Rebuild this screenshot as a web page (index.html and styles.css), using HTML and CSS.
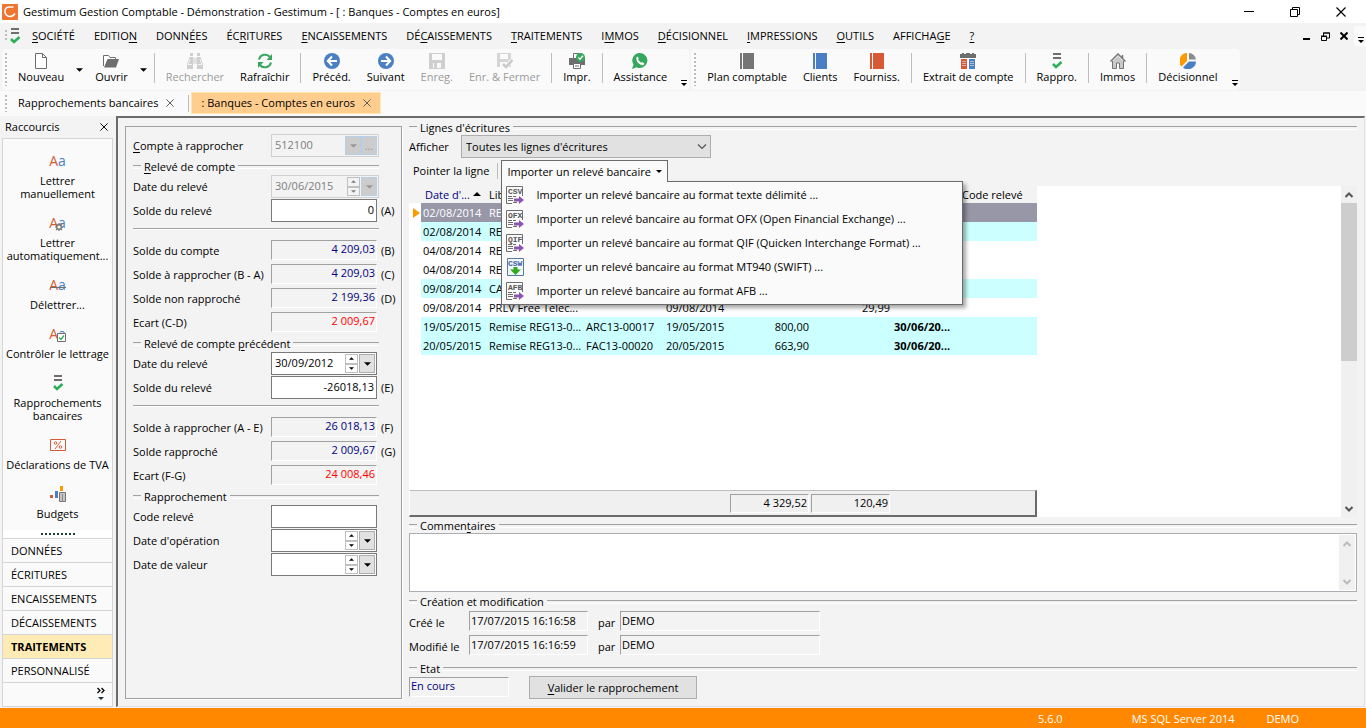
FILE: index.html
```
<!DOCTYPE html>
<html lang="fr">
<head>
<meta charset="utf-8">
<title>Gestimum Gestion Comptable</title>
<link rel="stylesheet" href="styles.css">
</head>
<body>
<svg class="sprite" aria-hidden="true">
  <symbol id="i-rappro" viewBox="0 0 16 16"><path d="M4 0h8v2H4zM4 4h8v2H4z" fill="#6e6e6e"/><path d="M4 11l3 3 5.500-5" fill="none" stroke="#2fae58" stroke-width="2.600"/></symbol>
  <symbol id="i-new" viewBox="0 0 16 16"><path d="M2.500.5h7l4 4v11h-11zM9.500.5v4h4" fill="#fff" stroke="#6e6e6e"/></symbol>
  <symbol id="i-open" viewBox="0 0 16 16"><path d="M.5 13V2.500h5l1.500 2h5.500v2" fill="#fff" stroke="#6e6e6e"/><path d="M1 14.500L4.500 6H16l-3 8.500z" fill="#6e6e6e"/></symbol>
  <symbol id="i-find" viewBox="0 0 16 16"><path d="M3 0h3v3H3zM10 0h3v3h-3zM2.500 4h4v1h3V4h4L16 11v5h-6v-5H6v5H0v-5z" fill="#cfcfcf"/><path d="M3 6l-2 6M7 5v6M9 5v6M13 6l2 6M1 11.500h4M11 11.500h4" stroke="#f4f4f4" fill="none"/></symbol>
  <symbol id="i-refresh" viewBox="0 0 16 16"><path d="M2 6.500A6.300 6.300 0 0 1 13 4M14 9.500A6.300 6.300 0 0 1 3 12" fill="none" stroke="#37a75e" stroke-width="2"/><path d="M15 1v6H9.500zM1 15V9h5.500z" fill="#37a75e"/></symbol>
  <symbol id="i-prev" viewBox="0 0 16 16"><circle cx="8" cy="8" r="8" fill="#4a80c3"/><path d="M13 8H4M8 3.500L3.800 8 8 12.500" fill="none" stroke="#fff" stroke-width="2"/></symbol>
  <symbol id="i-next" viewBox="0 0 16 16"><circle cx="8" cy="8" r="8" fill="#4a80c3"/><path d="M3 8h9M8 3.500L12.200 8 8 12.500" fill="none" stroke="#fff" stroke-width="2"/></symbol>
  <symbol id="i-save" viewBox="0 0 16 16"><path d="M0 0h16v16H0z" fill="#cfcfcf"/><path d="M3 1h10v6H3zM4 10h8v5H4z" fill="#fafafa"/><path d="M5 10h3v5H5z" fill="#cfcfcf"/></symbol>
  <symbol id="i-saveclose" viewBox="0 0 16 16"><path d="M0 0h14v14H0z" fill="#d5d5d5"/><path d="M3 1h8v5H3zM3 9h7v5H3z" fill="#fafafa"/><path d="M6 11l3 3 6-7" fill="none" stroke="#fafafa" stroke-width="4"/><path d="M6 11l3 3 6.500-7" fill="none" stroke="#cacaca" stroke-width="2.600"/></symbol>
  <symbol id="i-print" viewBox="0 0 16 16"><path d="M4.500 6V.5h6V6" fill="#fff" stroke="#6e6e6e"/><path d="M0 5h16v7H0z" fill="#6e6e6e"/><path d="M4.500 10.500h7v5h-7z" fill="#fff" stroke="#6e6e6e"/><path d="M6 13h4" stroke="#6e6e6e"/><circle cx="11.500" cy="4.500" r="4.500" fill="#37a75e"/><path d="M9.500 4.500l1.500 1.700L14 2.800" fill="none" stroke="#fff" stroke-width="1.300"/></symbol>
  <symbol id="i-phone" viewBox="0 0 16 16"><path d="M8 0a7.500 7.500 0 1 1-3.500 14.200L0 16l1.500-4.500A7.500 7.500 0 0 1 8 0z" fill="#37a75e"/><path d="M5 3.500l1.700 1.200-.4 2.300 2.500 2.600 2.200-.4 1.400 1.700c-1.200 2-3.800 1.300-5.600-.3C4.800 8.700 3.500 5.500 5 3.500z" fill="#fff"/></symbol>
  <symbol id="i-book" viewBox="0 0 16 16"><path d="M1 0h2v16H1zM4 0h11v16H4z" fill="currentColor"/></symbol>
  <symbol id="i-extract" viewBox="0 0 16 16"><path d="M.500 3.500h15v12H.500z" fill="#fff"/><path d="M1 6h6v10H1z" fill="#d65a36"/><path d="M9 6h6v10H9z" fill="#4a80c3"/><path d="M0 1h2V0h2v1h2V0h4v1h2V0h2v1h2v4H0z" fill="#6e6e6e"/><path d="M2 8.500h4M2 10.500h4M2 12.500h4M10 8.500h4M10 10.500h4M10 12.500h4" stroke="#fff" stroke-width=".5"/></symbol>
  <symbol id="i-house" viewBox="0 0 16 16"><path d="M2.500 8v7.500h4V10h3v5.500h4V8" fill="#c9c9c9" stroke="#757575"/><path d="M.5 8.500L8 1l7.500 7.500M12.500 5V2" fill="none" stroke="#757575" stroke-width="1.500"/><path d="M3 8l5-5 5 5z" fill="#c9c9c9"/></symbol>
  <symbol id="i-pie" viewBox="0 0 16 16"><path d="M7 8V0A8 8 0 0 0 1.500 13.500z" fill="#f90"/><path d="M9 0v6.500h7A7.500 7.500 0 0 0 9 0z" fill="#8a8a8a"/><path d="M9 8.500h7A8 8 0 0 1 3 14.500z" fill="#4a80c3"/></symbol>
  <symbol id="i-gear" viewBox="0 0 8 8"><circle cx="4" cy="4" r="2.300" fill="#fafafa" stroke="#757575" stroke-width="1.400"/><path d="M4 0v1.500M4 6.500V8M0 4h1.500M6.500 4H8M1 1l1.200 1.200M5.800 5.800L7 7M1 7l1.200-1.200M5.800 2.200L7 1" stroke="#757575" stroke-width="1.200"/></symbol>
  <symbol id="i-checkbox" viewBox="0 0 9 9"><path d="M.5.5h8v8h-8z" fill="#fff" stroke="#6e6e6e"/><path d="M2 4.500L4 6.500 7 2.500" fill="none" stroke="#2fae58" stroke-width="1.300"/></symbol>
  <symbol id="i-tva" viewBox="0 0 16 16"><path d="M.5 2.500h15v11H.500z" fill="#fff" stroke="#d65a36"/><path d="M5 12l6-8" stroke="#d65a36"/><circle cx="5.500" cy="6" r="1.300" fill="none" stroke="#d65a36"/><circle cx="10.500" cy="10" r="1.300" fill="none" stroke="#d65a36"/></symbol>
  <symbol id="i-budget" viewBox="0 0 16 16"><path d="M0 9h3v3H0z" fill="#d65a36"/><path d="M5 5h3v7H5z" fill="#4a80c3"/><path d="M10 0h3v5h-3z" fill="#f90"/><path d="M9.500 6.500h6v9h-6z" fill="#fff" stroke="#757575"/><path d="M10 8h5M10 10h5M10 12h5M10 14h5M12.500 8v8" stroke="#8a8a8a"/></symbol>
  <symbol id="i-file" viewBox="0 0 18 18"><path d="M.5 17.500V.5h16V10M.5 17.500H6" fill="none" stroke="#6e6e6e"/><path d="M2 10.500h4M2 12.500h5M2 14.500h5M7 10.500h3M7 16.500h4" stroke="#6e6e6e"/><path d="M8 12.500h5V10l5 4-5 4v-2.500H8z" fill="#8a55ac"/></symbol>
  <symbol id="i-filedown" viewBox="0 0 18 18"><path d="M1.500.5h16v17h-16z" fill="#f4f8fc" stroke="#5a7a9c"/><path d="M7.500 9h4v2.500H15L9.500 17 4 11.500h3.500z" fill="#35a826"/></symbol>
  <symbol id="i-down" viewBox="0 0 8 4"><path d="M0 0h8L4 4z" fill="currentColor"/></symbol>
  <symbol id="i-up" viewBox="0 0 8 4"><path d="M0 4h8L4 0z" fill="currentColor"/></symbol>
  <symbol id="i-chev" viewBox="0 0 8 6"><path d="M.5 1L4 4.500 7.500 1" fill="none" stroke="currentColor" stroke-width="2"/></symbol>
  <symbol id="i-chevup" viewBox="0 0 8 6"><path d="M.5 5L4 1.500 7.500 5" fill="none" stroke="currentColor" stroke-width="2"/></symbol>
  <symbol id="i-x" viewBox="0 0 10 10"><path d="M.5.5l9 9M9.500.5l-9 9" stroke="currentColor" stroke-width="1.200" fill="none"/></symbol>
  <symbol id="i-overflow" viewBox="0 0 6 6"><path d="M0 0h6v1H0zM0 3h6L3 6z" fill="currentColor"/></symbol>
</svg>

<header class="titlebar">
  <svg class="logo" viewBox="0 0 16 16"><rect width="16" height="16" rx="1" fill="#ef7430"/><path d="M11.500 3H7a4 4 0 0 0-4 4.500C3 10 5 12.500 8 12.500c2.500 0 4-1.500 5-3" fill="none" stroke="#fff" stroke-width="1.500"/></svg>
  <span class="title">Gestimum Gestion Comptable - Démonstration - Gestimum - [ : Banques - Comptes en euros]</span>
  <div class="winbtns">
    <button aria-label="Réduire"><svg width="10" height="10"><path d="M0 4.500h10" stroke="#000"/></svg></button>
    <button aria-label="Restaurer"><svg width="10" height="10"><path d="M.5 2.500h7v7h-7zM2.500 2V.5h7v7H8" fill="none" stroke="#000"/></svg></button>
    <button aria-label="Fermer"><svg width="10" height="10"><use href="#i-x"/></svg></button>
  </div>
</header>

<nav class="menubar">
  <span class="grip"></span>
  <svg width="16" height="16"><use href="#i-rappro"/></svg>
  <button><u>S</u>OCIÉTÉ</button><button>EDITIO<u>N</u></button><button>DONN<u>É</u>ES</button><button>ÉC<u>R</u>ITURES</button><button><u>E</u>NCAISSEMENTS</button><button>DÉ<u>C</u>AISSEMENTS</button><button><u>T</u>RAITEMENTS</button><button>I<u>M</u>MOS</button><button><u>D</u>ÉCISIONNEL</button><button><u>I</u>MPRESSIONS</button><button><u>O</u>UTILS</button><button>AFFICHA<u>G</u>E</button><button><u>?</u></button>
  <div class="mdibtns">
    <button aria-label="Réduire la fenêtre"><svg width="8" height="8"><path d="M0 7h7" stroke="#000" stroke-width="2"/></svg></button>
    <button aria-label="Restaurer la fenêtre"><svg width="9" height="9"><path d="M.5 4.500h5v4h-5zM2.500 4V1h6v5H6M2 1h7M0 4h6" fill="none" stroke="#000"/></svg></button>
    <button aria-label="Fermer la fenêtre"><svg width="8" height="8"><path d="M.5.5l7 7M7.500.5l-7 7" stroke="#000" stroke-width="2"/></svg></button>
    <button class="menu-more" aria-label="Options"><svg width="6" height="6"><use href="#i-overflow"/></svg></button>
  </div>
</nav>

<div class="toolbars">
  <div class="toolbar">
    <span class="grip"></span>
    <button class="tool"><svg><use href="#i-new"/></svg>Nouveau</button><button class="drop" aria-label="Options Nouveau"><svg><use href="#i-down"/></svg></button>
    <button class="tool"><svg><use href="#i-open"/></svg>Ouvrir</button><button class="drop" aria-label="Options Ouvrir"><svg><use href="#i-down"/></svg></button>
    <span class="sep"></span>
    <button class="tool" disabled><svg><use href="#i-find"/></svg>Rechercher</button>
    <button class="tool"><svg><use href="#i-refresh"/></svg>Rafraîchir</button>
    <span class="sep"></span>
    <button class="tool"><svg><use href="#i-prev"/></svg>Précéd.</button>
    <button class="tool"><svg><use href="#i-next"/></svg>Suivant</button>
    <button class="tool" disabled><svg><use href="#i-save"/></svg>Enreg.</button>
    <button class="tool" disabled><svg><use href="#i-saveclose"/></svg>Enr. &amp; Fermer</button>
    <span class="sep"></span>
    <button class="tool"><svg><use href="#i-print"/></svg>Impr.</button>
    <span class="sep"></span>
    <button class="tool"><svg><use href="#i-phone"/></svg>Assistance</button>
    <button class="more" aria-label="Plus"><svg><use href="#i-overflow"/></svg></button>
  </div>
  <div class="toolbar">
    <span class="grip"></span>
    <button class="tool"><svg class="c-gray"><use href="#i-book"/></svg>Plan comptable</button>
    <button class="tool"><svg class="c-blue"><use href="#i-book"/></svg>Clients</button>
    <button class="tool"><svg class="c-red"><use href="#i-book"/></svg>Fourniss.</button>
    <span class="sep"></span>
    <button class="tool"><svg><use href="#i-extract"/></svg>Extrait de compte</button>
    <span class="sep"></span>
    <button class="tool"><svg><use href="#i-rappro"/></svg>Rappro.</button>
    <span class="sep"></span>
    <button class="tool"><svg><use href="#i-house"/></svg>Immos</button>
    <span class="sep"></span>
    <button class="tool"><svg><use href="#i-pie"/></svg>Décisionnel</button>
    <button class="more" aria-label="Plus"><svg><use href="#i-overflow"/></svg></button>
  </div>
</div>

<div class="tabs">
  <span class="grip"></span>
  <div class="tab"><button>Rapprochements bancaires</button><button aria-label="Fermer l'onglet"><svg width="8" height="8"><use href="#i-x"/></svg></button></div>
  <span class="sep"></span>
  <div class="tab active"><button>: Banques - Comptes en euros</button><button aria-label="Fermer l'onglet"><svg width="8" height="8"><use href="#i-x"/></svg></button></div>
</div>

<div class="workspace">
  <aside class="sidebar">
    <div class="side-head"><span>Raccourcis</span><button aria-label="Fermer"><svg width="8" height="8"><use href="#i-x"/></svg></button></div>
    <div class="side-box">
      <div class="shortcuts">
        <button><span class="ico aa"><i>A</i><b>a</b></span><span>Lettrer<br>manuellement</span></button>
        <button><span class="ico aa"><i>A</i><b>a</b><svg class="over gear"><use href="#i-gear"/></svg></span><span>Lettrer<br>automatiquement...</span></button>
        <button><span class="ico aa struck"><i>A</i><b>a</b></span><span>Délettrer...</span></button>
        <button><span class="ico aa"><i>A</i><b>a</b><svg class="over check"><use href="#i-checkbox"/></svg></span><span>Contrôler le lettrage</span></button>
        <button><svg class="ico"><use href="#i-rappro"/></svg><span>Rapprochements<br>bancaires</span></button>
        <button><svg class="ico"><use href="#i-tva"/></svg><span>Déclarations de TVA</span></button>
        <button><svg class="ico"><use href="#i-budget"/></svg><span>Budgets</span></button>
      </div>
      <div class="dots"><span></span></div>
      <div class="groups">
        <button>DONNÉES</button><button>ÉCRITURES</button><button>ENCAISSEMENTS</button><button>DÉCAISSEMENTS</button><button class="active">TRAITEMENTS</button><button>PERSONNALISÉ</button>
        <button class="side-more" aria-label="Plus de groupes"><svg width="8" height="14"><path d="M.5 1l2.500 2.500L.5 6M4.500 1L7 3.500 4.500 6" fill="none" stroke="#000" stroke-width="1.300"/><path d="M1 10h6l-3 3z" fill="#1b3038"/></svg></button>
      </div>
    </div>
  </aside>

  <main class="mdi">
    <form class="form">
      <div class="row"><label for="cpt"><u>C</u>ompte à rapprocher</label><span class="combo off wide"><input id="cpt" value="512100" disabled><button type="button" disabled aria-label="Liste"><svg><use href="#i-down"/></svg></button><button type="button" disabled>...</button></span></div>
      <h2 class="legend"><span><u>R</u>elevé de compte</span></h2>
      <div class="row"><label for="d1">Date du relevé</label><span class="combo off wide"><input id="d1" value="30/06/2015" disabled><span class="spin"><button type="button" disabled aria-label="Plus"><svg><use href="#i-up"/></svg></button><button type="button" disabled aria-label="Moins"><svg><use href="#i-down"/></svg></button></span><button type="button" disabled aria-label="Calendrier"><svg><use href="#i-down"/></svg></button></span></div>
      <div class="row"><label for="s1">Solde du relevé</label><input class="box num" id="s1" value="0"><span>(A)</span></div>
      <hr>
      <div class="row"><label for="b">Solde du compte</label><output class="ro" id="b">4 209,03</output><span>(B)</span></div>
      <div class="row"><label for="c">Solde à rapprocher (B - A)</label><output class="ro" id="c">4 209,03</output><span>(C)</span></div>
      <div class="row"><label for="d">Solde non rapproché</label><output class="ro" id="d">2 199,36</output><span>(D)</span></div>
      <div class="row"><label for="e1">Ecart (C-D)</label><output class="ro neg" id="e1">2 009,67</output></div>
      <h2 class="legend"><span>Relevé de compte <u>p</u>récédent</span></h2>
      <div class="row"><label for="d2">Date du relevé</label><span class="combo"><input id="d2" value="30/09/2012"><span class="spin"><button type="button" aria-label="Plus"><svg><use href="#i-up"/></svg></button><button type="button" aria-label="Moins"><svg><use href="#i-down"/></svg></button></span><button type="button" aria-label="Calendrier"><svg><use href="#i-down"/></svg></button></span></div>
      <div class="row"><label for="s2">Solde du relevé</label><input class="box num" id="s2" value="-26018,13"><span>(E)</span></div>
      <hr>
      <div class="row"><label for="f">Solde à rapprocher (A - E)</label><output class="ro" id="f">26 018,13</output><span>(F)</span></div>
      <div class="row"><label for="g">Solde rapproché</label><output class="ro" id="g">2 009,67</output><span>(G)</span></div>
      <div class="row"><label for="e2">Ecart (F-G)</label><output class="ro neg" id="e2">24 008,46</output></div>
      <h2 class="legend"><span>Rapprochement</span></h2>
      <div class="row"><label for="cr">Code relevé</label><input class="box" id="cr"></div>
      <div class="row"><label for="do">Date d'opération</label><span class="combo"><input id="do"><span class="spin"><button type="button" aria-label="Plus"><svg><use href="#i-up"/></svg></button><button type="button" aria-label="Moins"><svg><use href="#i-down"/></svg></button></span><button type="button" aria-label="Calendrier"><svg><use href="#i-down"/></svg></button></span></div>
      <div class="row"><label for="dv">Date de valeur</label><span class="combo"><input id="dv"><span class="spin"><button type="button" aria-label="Plus"><svg><use href="#i-up"/></svg></button><button type="button" aria-label="Moins"><svg><use href="#i-down"/></svg></button></span><button type="button" aria-label="Calendrier"><svg><use href="#i-down"/></svg></button></span></div>
    </form>

    <section class="detail">
      <h2 class="legend tight"><span>Lignes d'écritures</span></h2>
      <div class="filter"><label for="aff">Afficher</label><span class="select"><select id="aff"><option>Toutes les lignes d'écritures</option></select><svg width="10" height="6"><path d="M1 .5l4 4 4-4" fill="none" stroke="#555" stroke-width="1.200"/></svg></span></div>
      <div class="actions">
        <button class="flat">Pointer la ligne</button>
        <span class="sep"></span>
        <div class="menu-wrap">
          <button class="menu-btn">Importer un relevé bancaire<svg width="6" height="3"><use href="#i-down"/></svg></button>
          <div class="menu">
            <button><svg class="file"><use href="#i-file"/><text x="2" y="8">CSV</text></svg>Importer un relevé bancaire au format texte délimité ...</button>
            <button><svg class="file"><use href="#i-file"/><text x="2" y="8">OFX</text></svg>Importer un relevé bancaire au format OFX (Open Financial Exchange) ...</button>
            <button><svg class="file"><use href="#i-file"/><text x="2" y="8">QIF</text></svg>Importer un relevé bancaire au format QIF (Quicken Interchange Format) ...</button>
            <button><svg class="file blue"><use href="#i-filedown"/><text x="2" y="8">CSW</text></svg>Importer un relevé bancaire au format MT940 (SWIFT) ...</button>
            <button><svg class="file"><use href="#i-file"/><text x="2" y="8">AFB</text></svg>Importer un relevé bancaire au format AFB ...</button>
          </div>
        </div>
      </div>

      <div class="grid-view">
        <div class="grid-body">
          <table>
            <colgroup><col class="w-mark"><col class="w-date"><col class="w-lib"><col class="w-piece"><col class="w-date"><col class="w-amt"><col class="w-amt"><col class="w-point"><col class="w-code"></colgroup>
            <thead><tr><th></th><th class="sorted">Date d'... <svg width="8" height="4"><use href="#i-up"/></svg></th><th>Lib</th><th></th><th></th><th></th><th></th><th></th><th>Code relevé</th></tr></thead>
            <tbody>
              <tr class="sel"><td><svg width="7" height="10"><path d="M0 0l7 5-7 5z" fill="#f90"/></svg></td><td>02/08/2014</td><td>RE</td><td></td><td></td><td></td><td></td><td></td><td></td></tr>
              <tr class="alt"><td></td><td>02/08/2014</td><td>RE</td><td></td><td></td><td></td><td></td><td></td><td></td></tr>
              <tr><td></td><td>04/08/2014</td><td>RE</td><td></td><td></td><td></td><td></td><td></td><td></td></tr>
              <tr><td></td><td>04/08/2014</td><td>RE</td><td></td><td></td><td></td><td></td><td></td><td></td></tr>
              <tr class="alt"><td></td><td>09/08/2014</td><td>CA</td><td></td><td></td><td></td><td></td><td></td><td></td></tr>
              <tr><td></td><td>09/08/2014</td><td>PRLV Free Telec...</td><td></td><td>09/08/2014</td><td></td><td class="amt">29,99</td><td></td><td></td></tr>
              <tr class="alt"><td></td><td>19/05/2015</td><td>Remise REG13-0...</td><td>ARC13-00017</td><td>19/05/2015</td><td class="amt">800,00</td><td></td><td><b>30/06/20...</b></td><td></td></tr>
              <tr class="alt"><td></td><td>20/05/2015</td><td>Remise REG13-0...</td><td>FAC13-00020</td><td>20/05/2015</td><td class="amt">663,90</td><td></td><td><b>30/06/20...</b></td><td></td></tr>
            </tbody>
          </table>
          <div class="totals"><output>4 329,52</output><output>120,49</output></div>
        </div>
        <div class="scroll"><button aria-label="Haut"><svg><use href="#i-chevup"/></svg></button><span class="thumb"></span><button aria-label="Bas"><svg><use href="#i-chev"/></svg></button></div>
      </div>

      <h2 class="legend tight"><label for="com">Commen<u>t</u>aires</label></h2>
      <div class="comment"><textarea id="com"></textarea><div class="scroll dim"><button aria-label="Haut"><svg><use href="#i-chevup"/></svg></button><button aria-label="Bas"><svg><use href="#i-chev"/></svg></button></div></div>

      <h2 class="legend tight"><span>Création et modification</span></h2>
      <div class="audit">
        <span>Créé le</span><output class="ro txt">17/07/2015 16:16:58</output><span>par</span><output class="ro txt">DEMO</output>
        <span>Modifié le</span><output class="ro txt">17/07/2015 16:16:59</output><span>par</span><output class="ro txt">DEMO</output>
      </div>
      <h2 class="legend tight"><span>Etat</span></h2>
      <div class="state"><output class="ro txt navy">En cours</output><button class="push"><u>V</u>alider le rapprochement</button></div>
    </section>
  </main>
</div>

<footer class="status"><span>5.6.0</span><span>MS SQL Server 2014</span><span>DEMO</span></footer>
</body>
</html>
```
FILE: styles.css
```
* { box-sizing: border-box; }
body {
  margin: 0;
  min-height: 100vh;
  display: flex;
  flex-direction: column;
  background: #f3f3f3;
  color: #000;
  font: 11px/16px "Open Sans", "Noto Sans", sans-serif;
}
button, input, select, textarea { font: inherit; color: inherit; margin: 0; }
button { background: none; border: 0; padding: 0; white-space: nowrap; }
svg { display: block; flex: none; }
u { text-underline-offset: 2px; }
.sprite { position: absolute; width: 0; height: 0; }
.grip {
  flex: none;
  width: 2px;
  margin: 4px 0;
  background: repeating-linear-gradient(#bdbdbd 0 2px, transparent 2px 4px);
}

/* Title bar */
.titlebar { display: flex; align-items: center; height: 23px; padding-left: 2px; background: #fff; }
.logo { width: 16px; height: 16px; }
.title { flex: 1; padding-left: 5px; white-space: nowrap; }
.winbtns { display: flex; padding-right: 2px; }
.winbtns button { width: 46px; display: flex; justify-content: center; }

/* Menu bar */
.menubar { display: flex; align-items: center; height: 26px; padding-left: 5px; }
.menubar .grip { height: 12px; }
.menubar > button { padding: 0 10px 0 9px; }
.mdibtns { display: flex; align-items: center; gap: 10px; margin-left: auto; }
.menubar .menu-more { height: 20px; margin-left: -4px; padding: 8px 2px 0 4px; background: #fafafa; }

/* Tool bars */
.toolbars { display: flex; gap: 2px; height: 42px; padding-left: 2px; }
.toolbar { display: flex; height: 41px; padding-left: 3px; background: #fafafa; border-radius: 4px; }
.tool { display: flex; flex-direction: column; align-items: center; padding: 4px 8px 0; }
.toolbar .grip + .tool { padding-left: 11px; }
.tool svg { width: 16px; height: 16px; }
.tool:disabled { color: #9a9a9a; }
.drop { width: 15px; padding-left: 4px; }
.drop svg { width: 7px; height: 4px; }
.sep { flex: none; width: 1px; margin: 4px 3px 7px; background: #bdbdbd; }
.more { width: 14px; padding: 27px 0 0 6px; }
.more svg { width: 6px; height: 6px; }
.c-gray { color: #757575; }
.c-blue { color: #4a80c3; }
.c-red { color: #d65a36; }

/* Document tabs */
.tabs { display: flex; height: 25px; padding-left: 5px; background: #fafafa; }
.tab { display: flex; align-items: center; gap: 8px; height: 22px; margin-top: 1px; padding: 0 11px; }
.tab svg { color: #555; }
.tabs .sep { margin: 4px 2px 4px 3px; }
.tab.active { background: #ffce8f; border: 1px solid #ffe6ae; padding: 0 9px; }

/* Workspace */
.workspace { flex: 1; display: flex; }
.sidebar { flex: none; width: 116px; padding: 0 3px 1px 2px; display: flex; flex-direction: column; }
.side-head { display: flex; align-items: center; justify-content: space-between; height: 22px; padding: 0 5px 0 3px; }
.side-box { flex: 1; display: flex; flex-direction: column; border: 1px solid #d5d5d5; background: #fafafa; }
.shortcuts { flex: 1; display: flex; flex-direction: column; padding-top: 14px; }
.shortcuts button { display: flex; flex-direction: column; align-items: center; gap: 5px; padding-bottom: 15px; line-height: 13px; }
.shortcuts button:last-child { padding-bottom: 8px; }
.ico { width: 16px; height: 16px; }
.aa { position: relative; display: flex; justify-content: center; font-size: 14px; line-height: 16px; }
.aa i { font-style: normal; color: #d65a36; }
.aa b { font-weight: normal; color: #4a80c3; }
.over { position: absolute; right: 0; bottom: 0; width: 9px; height: 9px; }
.over.gear { right: 3px; width: 8px; height: 8px; }
.struck::after { content: ""; position: absolute; left: 0; right: 0; top: 10px; border-top: 1px solid #6e6e6e; }
.dots { display: flex; justify-content: center; align-items: center; height: 8px; background: #fff; }
.dots span { width: 34px; height: 2px; background: repeating-linear-gradient(90deg, #1b4038 0 2px, transparent 2px 4px); }
.groups { display: flex; flex-direction: column; }
.groups button { height: 24px; padding-left: 8px; border-top: 1px solid #d5d5d5; text-align: left; }
.groups .active { background: #ffebb5; font-weight: bold; }
.groups .side-more { display: flex; justify-content: flex-end; padding: 4px 7px 0; }

.mdi {
  flex: 1;
  min-width: 0;
  display: flex;
  gap: 7px;
  margin: 0 1px 1px 0;
  padding: 3px 7px 7px;
  border: 1px solid #e0e0e0;
  border-top: 2px solid #6b6b6b;
  border-left: 2px solid #6b6b6b;
}

/* Reconciliation form */
.form { flex: none; width: 277px; margin-top: 5px; padding: 7px 0 0 7px; border: 1px solid #a0a0a0; box-shadow: 1px 1px 0 #fff; }
.row { display: grid; grid-template-columns: 138px 106px 1fr; height: 24px; }
.row label, .row > span:last-child:not(.combo) { line-height: 24px; white-space: nowrap; }
.row > span:last-child:not(.combo) { padding-left: 4px; }
.box, .combo { height: 23px; border: 1px solid #7a7a7a; background: #fff; }
.box { width: 106px; padding: 0 2px 2px; }
.num { text-align: right; }
.combo { display: flex; padding: 1px; }
.combo input { flex: 1; min-width: 0; padding: 0 0 2px 2px; border: 0; background: none; }
.combo > button { display: flex; align-items: center; justify-content: center; width: 16px; border: 1px solid #adadad; background: #e1e1e1; }
.combo > button svg { width: 7px; height: 4px; }
.spin { display: grid; width: 13px; margin-right: 1px; }
.spin button { display: flex; align-items: center; justify-content: center; border: 1px solid #c0c0c0; }
.spin svg { width: 5px; height: 3px; }
.wide { width: 108px; }
.off { border-color: #d0d0d0; background: #f3f3f3; color: #7d7d7d; }
.off > button { background: #ccc; border-color: #b5cfe8; color: #999; line-height: 12px; }
.ro { display: block; height: 20px; border: 1px solid #a0a0a0; border-right-color: #fff; border-bottom-color: #fff; padding-right: 1px; color: #000080; text-align: right; line-height: 16px; }
.row .ro { margin-top: 1px; }
.ro.neg { color: #f00; }
.ro.txt { padding-left: 1px; color: #000; text-align: left; }
.ro.navy { color: #000080; }
.form hr { height: 16px; margin: 0 22px 0 0; padding: 0; border: 0; background: linear-gradient(#a0a0a0 0 1px, #fff 1px 2px) 0 5px / 100% 2px no-repeat; }

.legend { display: flex; align-items: center; gap: 3px; height: 17px; margin: 0 22px 0 0; font-size: 11px; font-weight: normal; line-height: 14px; white-space: nowrap; }
.legend::before, .legend::after { content: ""; height: 2px; border-top: 1px solid #a0a0a0; border-bottom: 1px solid #fff; }
.legend::before { width: 8px; }
.legend::after { flex: 1; }
.legend.tight { height: 14px; margin: 0; }

/* Entries */
.detail { flex: 1; min-width: 0; display: flex; flex-direction: column; }
.filter { display: grid; grid-template-columns: 52px 250px; align-items: center; height: 23px; }
.select { position: relative; }
.select select { appearance: none; width: 100%; height: 23px; padding: 0 4px; border: 1px solid #adadad; border-radius: 0; background: #e1e1e1; }
.select svg { position: absolute; right: 4px; top: 9px; pointer-events: none; }
.actions { display: flex; height: 28px; padding: 2px 0 4px 4px; }
.actions .sep { margin: 3px 3px 3px 8px; }
.menu-wrap { position: relative; }
.menu-btn { position: relative; z-index: 2; display: flex; align-items: center; gap: 5px; height: 22px; padding: 0 5px; border: 1px solid #6b6b6b; border-bottom: 0; background: #fafafa; }
.menu { position: absolute; z-index: 1; left: 0; top: 21px; width: 462px; padding: 1px 0; border: 1px solid #6b6b6b; background: #fafafa; box-shadow: 3px 3px 4px rgba(0, 0, 0, .35); }
.menu button { display: flex; align-items: center; gap: 12px; width: 100%; height: 24px; padding-left: 4px; text-align: left; }
.file { width: 18px; height: 18px; }
.file text { font: bold 8px "Liberation Mono", monospace; fill: #555; }
.file.blue text { fill: #3a5fa8; }

.grid-view { flex: 1; display: flex; margin-bottom: 2px; background: #fff; }
.grid-body { flex: 1; min-width: 0; display: flex; flex-direction: column; justify-content: space-between; }
table { width: 628px; table-layout: fixed; border-collapse: collapse; }
.w-mark { width: 12px; }
.w-date { width: 66px; }
.w-lib { width: 97px; }
.w-piece { width: 80px; }
.w-amt { width: 81px; }
.w-point { width: 68px; }
.w-code { width: 77px; }
th { height: 17px; padding: 0 2px; background: #f3f3f3; font-weight: normal; text-align: left; white-space: nowrap; }
th.sorted { padding-left: 4px; color: #000080; }
th svg { display: inline-block; color: #000; vertical-align: 3px; }
td { height: 19px; padding: 0 2px; line-height: 17px; white-space: nowrap; }
td:first-child { padding-left: 4px; }
.alt td { background: #ccffff; }
.sel td { background: #9797a8; color: #fff; }
.sel td:first-child { background: #fff; }
td.amt { text-align: right; }
.alt td:first-child { background: #fff; }
.totals { display: flex; gap: 2px; width: 628px; height: 27px; padding: 3px 0 0 320px; border: 1px solid #fff; border-top-color: #bdbdbd; border-right: 2px solid #6b6b6b; border-bottom: 2px solid #6b6b6b; background: #f0f0f0; }
.totals output { width: 79px; height: 19px; padding-right: 1px; border: 1px solid #a0a0a0; border-right-color: #fff; border-bottom-color: #fff; text-align: right; }

.scroll { flex: none; width: 16px; display: flex; flex-direction: column; background: #f0f0f0; color: #555; }
.scroll button { display: flex; align-items: center; justify-content: center; height: 17px; }
.scroll button:last-child { margin-top: auto; }
.scroll svg { width: 8px; height: 6px; }
.thumb { height: 158px; background: #cdcdcd; }
.scroll.dim { color: #bbb; }
.comment { display: flex; height: 59px; margin-bottom: 3px; padding: 1px; border: 1px solid #abadb3; background: #fff; }
.comment textarea { flex: 1; border: 0; resize: none; outline: 0; background: none; }

.audit { display: grid; grid-template-columns: 60px 119px 32px 200px; gap: 4px 0; padding: 2px 0 7px; line-height: 24px; }
.audit > span:nth-child(4n+3) { padding-left: 10px; }
.audit > * { height: 20px; }
.audit .ro { line-height: 18px; }
.state { display: grid; grid-template-columns: 100px 168px; gap: 20px; height: 23px; }
.state .ro { margin-top: 1px; }
.push { height: 23px; border: 1px solid #adadad; background: #e1e1e1; }

.status { display: flex; height: 20px; padding-left: 1038px; background: #ff8800; color: #fff; line-height: 22px; }
.status span:nth-child(2) { margin: 0 32px 0 69px; }
```
